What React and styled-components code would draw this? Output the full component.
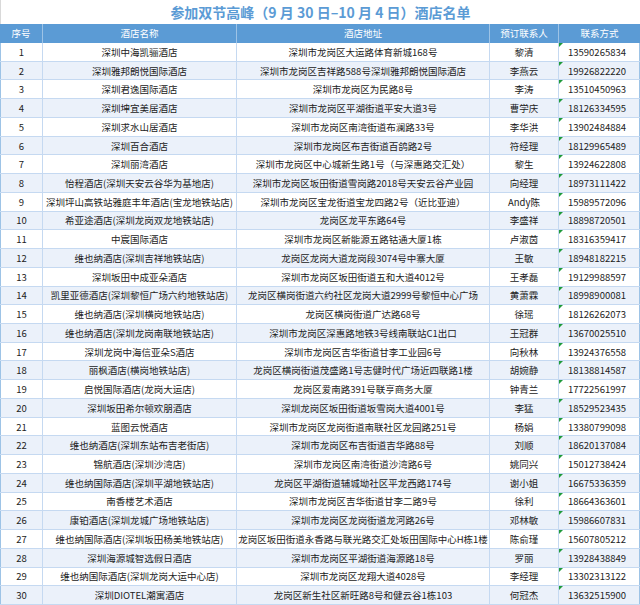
import styled, { createGlobalStyle } from "styled-components";

const GlobalStyle = createGlobalStyle`
  html, body {
    margin: 0;
    padding: 0;
    background: #ffffff;
  }
  body {
    font-family: "Noto Sans CJK SC", "Microsoft YaHei", sans-serif;
    color: #222222;
    overflow: hidden;
  }
  * {
    box-sizing: border-box;
  }
`;

const COLS = "43px 194px 253px 69px 81px";

const Sheet = styled.div`
  width: 640px;
  height: 605px;
  display: flex;
  flex-direction: column;
  overflow: hidden;
`;

const Title = styled.div`
  height: 24px;
  display: flex;
  align-items: center;
  justify-content: center;
  font-size: 14px;
  font-weight: 700;
  color: #5b9bd5;
  border-left: 1px solid #d9d9d9;
  white-space: pre;
`;

const HeadRow = styled.div`
  display: grid;
  grid-template-columns: ${COLS};
  height: 19px;
  background: #5b9bd5;
`;

const HeadCell = styled.div`
  display: flex;
  align-items: center;
  justify-content: center;
  font-size: 9.5px;
  color: #ffffff;
  border-right: 1px solid #9dc3e6;
  &:last-child {
    border-right: none;
  }
`;

const Row = styled.div`
  display: grid;
  grid-template-columns: ${COLS};
  height: 18.75px;
  background: ${(p) => (p.$even ? "#ebf1fa" : "#ffffff")};
  border-bottom: 1px solid #c5d9f1;
`;

const Cell = styled.div`
  position: relative;
  display: flex;
  align-items: center;
  justify-content: ${(p) => (p.$left ? "flex-start" : "center")};
  padding-left: ${(p) => (p.$left ? "9px" : "0")};
  font-size: 9.5px;
  white-space: nowrap;
  overflow: hidden;
  border-right: 1px solid #c5d9f1;
  &:first-child {
    border-left: 1px solid #9dc3e6;
  }
  &:last-child {
    border-right: 1px solid #9dc3e6;
  }
`;

// Excel 的“文本格式数字”绿色小三角
const Flag = styled.span`
  position: absolute;
  top: 0;
  left: 0;
  width: 0;
  height: 0;
  border-top: 4px solid #1f9a3a;
  border-right: 4px solid transparent;
`;

const hotels = [
  ["深圳中海凯骊酒店", "深圳市龙岗区大运路体育新城168号", "黎清", "13590265834"],
  ["深圳雅邦朗悦国际酒店", "深圳市龙岗区吉祥路588号深圳雅邦朗悦国际酒店", "李燕云", "19926822220"],
  ["深圳君逸国际酒店", "深圳市龙岗区为民路8号", "李涛", "13510450963"],
  ["深圳坤宜美居酒店", "深圳市龙岗区平湖街道平安大道3号", "曹学庆", "18126334595"],
  ["深圳求水山居酒店", "深圳市龙岗区南湾街道布澜路33号", "李华洪", "13902484884"],
  ["深圳百合酒店", "深圳市龙岗区布吉街道百鸽路2号", "符经理", "18129965489"],
  ["深圳丽湾酒店", "深圳市龙岗区中心城新生路1号（与深惠路交汇处）", "黎生", "13924622808"],
  ["怡程酒店(深圳天安云谷华为基地店)", "深圳市龙岗区坂田街道雪岗路2018号天安云谷产业园", "向经理", "18973111422"],
  ["深圳坪山高铁站雅庭丰年酒店(宝龙地铁站店)", "深圳市龙岗区宝龙街道宝龙四路2号（近比亚迪）", "Andy陈", "15989572096"],
  ["希亚途酒店(深圳龙岗双龙地铁站店)", "龙岗区龙平东路64号", "李盛祥", "18898720501"],
  ["中宸国际酒店", "深圳市龙岗区新能源五路钴通大厦1栋", "卢淑茵", "18316359417"],
  ["维也纳酒店(深圳吉祥地铁站店)", "龙岗区龙岗大道龙岗段3074号中寨大厦", "王敏", "18948182215"],
  ["深圳坂田中成亚朵酒店", "深圳市龙岗区坂田街道五和大道4012号", "王孝磊", "19129988597"],
  ["凯里亚德酒店(深圳黎恒广场六约地铁站店)", "龙岗区横岗街道六约社区龙岗大道2999号黎恒中心广场", "黄萧霖", "18998900081"],
  ["维也纳酒店(深圳横岗地铁站店)", "龙岗区横岗街道广达路68号", "徐瑶", "18126262073"],
  ["维也纳酒店(深圳龙岗南联地铁站店)", "深圳市龙岗区深惠路地铁3号线南联站C1出口", "王冠群", "13670025510"],
  ["深圳龙岗中海信亚朵S酒店", "深圳市龙岗区吉华街道甘李工业园6号", "向秋林", "13924376558"],
  ["丽枫酒店(横岗地铁站店)", "龙岗区横岗街道茂盛路1号志健时代广场近四联路1楼", "胡婉静", "18138814587"],
  ["启悦国际酒店(龙岗大运店)", "龙岗区爱南路391号联亨商务大厦", "钟青兰", "17722561997"],
  ["深圳坂田希尔顿欢朋酒店", "深圳龙岗区坂田街道坂雪岗大道4001号", "李猛", "18529523435"],
  ["蓝图云悦酒店", "深圳市龙岗区龙岗街道南联社区龙园路251号", "杨娟", "13380799098"],
  ["维也纳酒店(深圳东站布吉老街店)", "深圳市龙岗区布吉街道吉华路88号", "刘顺", "18620137084"],
  ["锦航酒店(深圳沙湾店)", "深圳市龙岗区南湾街道沙湾路6号", "姚同兴", "15012738424"],
  ["维也纳国际酒店(深圳平湖地铁站店)", "龙岗区平湖街道辅城坳社区平龙西路174号", "谢小姐", "16675336359"],
  ["南香楼艺术酒店", "深圳市龙岗区吉华街道甘李二路9号", "徐利", "18664363601"],
  ["康铂酒店(深圳龙城广场地铁站店)", "深圳市龙岗区龙岗街道龙河路26号", "邓林敏", "15986607831"],
  ["维也纳国际酒店(深圳坂田杨美地铁站店)", "龙岗区坂田街道永香路与联光路交汇处坂田国际中心H栋1楼", "陈俞瑾", "15607805212"],
  ["深圳海源城智选假日酒店", "深圳市龙岗区平湖街道海源路18号", "罗丽", "13928438849"],
  ["维也纳国际酒店(深圳龙岗大运中心店)", "深圳市龙岗区龙翔大道4028号", "李经理", "13302313122"],
  ["深圳DIOTEL潮寓酒店", "龙岗区新生社区新旺路8号和健云谷1栋103", "何冠杰", "13632515900"],
];

const heads = ["序号", "酒店名称", "酒店地址", "预订联系人", "联系方式"];

export default function App() {
  return (
    <Sheet>
      <GlobalStyle />
      <Title>参加双节高峰（9 月 30 日–10 月 4 日）酒店名单</Title>
      <HeadRow>
        {heads.map((h) => (
          <HeadCell key={h}>{h}</HeadCell>
        ))}
      </HeadRow>
      {hotels.map(([name, addr, person, phone], i) => (
        <Row key={i} $even={i % 2 === 1}>
          <Cell>{i + 1}</Cell>
          <Cell>{name}</Cell>
          <Cell>{addr}</Cell>
          <Cell>{person}</Cell>
          <Cell $left>
            <Flag />
            {phone}
          </Cell>
        </Row>
      ))}
    </Sheet>
  );
}
